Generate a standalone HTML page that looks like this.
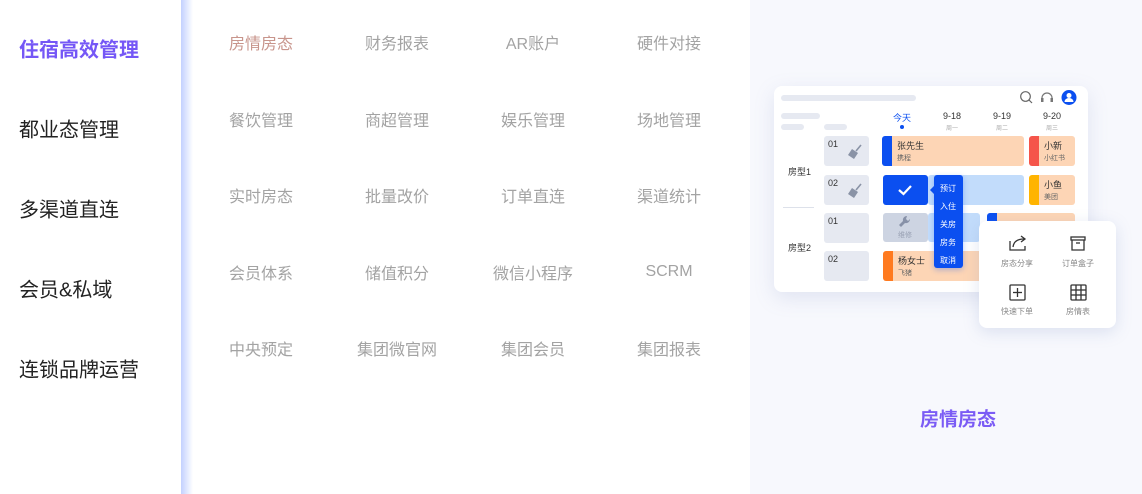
<!DOCTYPE html>
<html><head><meta charset="utf-8"><style>
*{margin:0;padding:0;box-sizing:border-box}
body{width:1142px;height:494px;overflow:hidden;background:#fff;position:relative;font-family:"Liberation Sans","Noto Sans CJK SC",sans-serif}
.a{position:absolute;white-space:nowrap}
.left{position:absolute;left:0;top:0;width:181px;height:494px;background:#fff}
.edge{position:absolute;left:181px;top:0;width:12px;height:494px;background:linear-gradient(90deg,#c3d1ff,#fff)}
.l{position:absolute;left:19px;font-size:20px;color:#222;transform:translateY(-50%)}
.g{position:absolute;font-size:16px;color:#a3a3a3;transform:translate(-50%,-50%)}
.right{position:absolute;left:750px;top:0;width:392px;height:494px;background:#f7f8fd}
.card{position:absolute;left:774px;top:86px;width:314px;height:206px;background:#fff;border-radius:8px;box-shadow:0 6px 20px rgba(120,140,190,.18)}
.bx{position:absolute}
.t{position:absolute;font-size:9px;color:#333;white-space:nowrap}
.s{position:absolute;font-size:7px;color:#666;white-space:nowrap}
</style></head><body>
<div class="left"></div><div class="edge"></div>
<div class="l" style="top:48px;color:#7557f6;font-weight:bold">住宿高效管理</div>
<div class="l" style="top:128px">都业态管理</div>
<div class="l" style="top:208px">多渠道直连</div>
<div class="l" style="top:288px">会员&amp;私域</div>
<div class="l" style="top:368px">连锁品牌运营</div>

<div class="g" style="left:261px;top:42px;color:#c8958c">房情房态</div>
<div class="g" style="left:397px;top:42px">财务报表</div>
<div class="g" style="left:533px;top:42px">AR账户</div>
<div class="g" style="left:669px;top:42px">硬件对接</div>
<div class="g" style="left:261px;top:119px">餐饮管理</div>
<div class="g" style="left:397px;top:119px">商超管理</div>
<div class="g" style="left:533px;top:119px">娱乐管理</div>
<div class="g" style="left:669px;top:119px">场地管理</div>
<div class="g" style="left:261px;top:195px">实时房态</div>
<div class="g" style="left:397px;top:195px">批量改价</div>
<div class="g" style="left:533px;top:195px">订单直连</div>
<div class="g" style="left:669px;top:195px">渠道统计</div>
<div class="g" style="left:261px;top:272px">会员体系</div>
<div class="g" style="left:397px;top:272px">储值积分</div>
<div class="g" style="left:533px;top:272px">微信小程序</div>
<div class="g" style="left:669px;top:272px">SCRM</div>
<div class="g" style="left:261px;top:348px">中央预定</div>
<div class="g" style="left:397px;top:348px">集团微官网</div>
<div class="g" style="left:533px;top:348px">集团会员</div>
<div class="g" style="left:669px;top:348px">集团报表</div>

<div class="right"></div>
<div class="a" style="left:958px;top:418px;transform:translate(-50%,-50%);font-size:19px;font-weight:bold;color:#7b5cf5">房情房态</div>

<div class="card"></div>
<div class="bx" style="left:781px;top:95px;width:135px;height:6px;border-radius:3px;background:#e6e9f1"></div>
<svg class="bx" style="left:1019px;top:90px" width="60" height="16" viewBox="0 0 60 16">
<circle cx="6.5" cy="6.5" r="4.8" fill="none" stroke="#666" stroke-width="1.2"/><line x1="10" y1="10" x2="13" y2="13" stroke="#666" stroke-width="1.2"/>
<path d="M23 10 V8 a5 5 0 0 1 10 0 V10" fill="none" stroke="#777" stroke-width="1.2"/><rect x="22" y="8" width="2.5" height="4" fill="#777"/><rect x="31.5" y="8" width="2.5" height="4" fill="#777"/>
<circle cx="50" cy="7.5" r="7.5" fill="#0b4ff0"/><circle cx="50" cy="5.5" r="2.5" fill="#fff"/><path d="M45.5 12 a4.5 4 0 0 1 9 0z" fill="#fff"/>
</svg>
<div class="bx" style="left:781px;top:113px;width:39px;height:6px;border-radius:3px;background:#e6e9f1"></div>
<div class="bx" style="left:781px;top:124px;width:23px;height:6px;border-radius:3px;background:#e6e9f1"></div>
<div class="bx" style="left:824px;top:124px;width:23px;height:6px;border-radius:3px;background:#e6e9f1"></div>
<div class="t" style="left:902px;top:111px;transform:translateX(-50%);color:#0b4ff0">今天</div>
<div class="bx" style="left:900px;top:125px;width:4px;height:4px;border-radius:2px;background:#0b4ff0"></div>
<div class="t" style="left:952px;top:111px;transform:translateX(-50%)">9-18</div>
<div class="t" style="left:1002px;top:111px;transform:translateX(-50%)">9-19</div>
<div class="t" style="left:1052px;top:111px;transform:translateX(-50%)">9-20</div>
<div class="s" style="left:952px;top:123px;transform:translateX(-50%);color:#aaa;font-size:6px">周一</div>
<div class="s" style="left:1002px;top:123px;transform:translateX(-50%);color:#aaa;font-size:6px">周二</div>
<div class="s" style="left:1052px;top:123px;transform:translateX(-50%);color:#aaa;font-size:6px">周三</div>

<div class="t" style="left:788px;top:165px">房型1</div>
<div class="bx" style="left:783px;top:207px;width:31px;height:1px;background:#dde1ea"></div>
<div class="t" style="left:788px;top:241px">房型2</div>

<div class="bx" style="left:824px;top:136px;width:45px;height:30px;border-radius:3px;background:#e6e9f1"></div>
<div class="bx" style="left:824px;top:175px;width:45px;height:30px;border-radius:3px;background:#e6e9f1"></div>
<div class="bx" style="left:824px;top:213px;width:45px;height:30px;border-radius:3px;background:#e6e9f1"></div>
<div class="bx" style="left:824px;top:251px;width:45px;height:30px;border-radius:3px;background:#e6e9f1"></div>
<div class="t" style="left:828px;top:139px">01</div>
<div class="t" style="left:828px;top:178px">02</div>
<div class="t" style="left:828px;top:216px">01</div>
<div class="t" style="left:828px;top:254px">02</div>
<svg class="bx" style="left:847px;top:144px" width="16" height="16" viewBox="0 0 16 16"><line x1="9" y1="7" x2="14" y2="1" stroke="#8a93a6" stroke-width="1.6"/><path d="M5 5 L11 9 L7 15 L1 11 Z" fill="#8a93a6"/></svg>
<svg class="bx" style="left:847px;top:183px" width="16" height="16" viewBox="0 0 16 16"><line x1="9" y1="7" x2="14" y2="1" stroke="#8a93a6" stroke-width="1.6"/><path d="M5 5 L11 9 L7 15 L1 11 Z" fill="#8a93a6"/></svg>

<div class="bx" style="left:882px;top:136px;width:142px;height:30px;border-radius:3px;background:#fdd5b5;border-left:10px solid #0b4ff0"></div>
<div class="t" style="left:897px;top:139px">张先生</div><div class="s" style="left:897px;top:153px">携程</div>
<div class="bx" style="left:1029px;top:136px;width:46px;height:30px;border-radius:3px;background:#fdd5b5;border-left:10px solid #f5554a"></div>
<div class="t" style="left:1044px;top:139px">小新</div><div class="s" style="left:1044px;top:153px">小红书</div>

<div class="bx" style="left:928px;top:175px;width:96px;height:30px;border-radius:3px;background:#c2dcfb"></div>
<div class="bx" style="left:883px;top:175px;width:45px;height:30px;border-radius:3px;background:#0b4ff0"></div>
<svg class="bx" style="left:897px;top:183px" width="16" height="14"><path d="M2 7 L6.5 11 L14 3" fill="none" stroke="#fff" stroke-width="2.2"/></svg>
<div class="bx" style="left:1029px;top:175px;width:46px;height:30px;border-radius:3px;background:#fdd5b5;border-left:10px solid #ffb400"></div>
<div class="t" style="left:1044px;top:178px">小鱼</div><div class="s" style="left:1044px;top:192px">美团</div>

<div class="bx" style="left:928px;top:213px;width:52px;height:29px;border-radius:3px;background:#c2dcfb"></div>
<div class="bx" style="left:883px;top:213px;width:45px;height:29px;border-radius:3px;background:#cdd4e2"></div>
<svg class="bx" style="left:898px;top:215px" width="14" height="14" viewBox="0 0 14 14"><path d="M9 1 a4 4 0 0 0 -4 5 L1 10 L3 12 L7 8 a4 4 0 0 0 5 -4 L10 6 L8 4 Z" fill="#8791a8"/></svg>
<div class="s" style="left:898px;top:230px;color:#98a0b3">维修</div>
<div class="bx" style="left:987px;top:213px;width:88px;height:29px;border-radius:3px;background:#fdd5b5;border-left:10px solid #0b4ff0"></div>

<div class="bx" style="left:883px;top:251px;width:100px;height:30px;border-radius:3px;background:#fdd5b5;border-left:10px solid #ff7a1f"></div>
<div class="t" style="left:898px;top:254px">杨女士</div><div class="s" style="left:898px;top:268px">飞猪</div>

<div class="bx" style="left:934px;top:175px;width:29px;height:93px;border-radius:3px;background:#0b4ff0;box-shadow:0 2px 6px rgba(11,79,240,.3)"></div>
<div class="bx" style="left:930px;top:186px;width:0;height:0;border:4px solid transparent;border-right-color:#0b4ff0;border-left:0"></div>
<div class="t" style="left:940px;top:180px;color:#fff;font-size:8px;line-height:18px">预订<br>入住<br>关房<br>房务<br>取消</div>

<div class="bx" style="left:979px;top:221px;width:137px;height:107px;border-radius:8px;background:#fff;box-shadow:0 4px 16px rgba(120,140,190,.22)"></div>
<svg class="bx" style="left:1008px;top:234px" width="90" height="68" viewBox="0 0 90 68" fill="none" stroke="#333" stroke-width="1.3">
<path d="M2 7 V16 H17 V12"/><path d="M5 13 Q6 5 16 5"/><path d="M13 2 L17 5 L13 8"/>
<rect x="63" y="3" width="14" height="3"/><path d="M64 6 V16 H76 V6"/><line x1="68" y1="9" x2="72" y2="9"/>
<rect x="2" y="51" width="15" height="15" rx="1"/><line x1="9.5" y1="54" x2="9.5" y2="63"/><line x1="5" y1="58.5" x2="14" y2="58.5"/>
<rect x="63" y="51" width="15" height="15" rx="1"/><line x1="68" y1="51" x2="68" y2="66"/><line x1="73" y1="51" x2="73" y2="66"/><line x1="63" y1="56" x2="78" y2="56"/><line x1="63" y1="61" x2="78" y2="61"/>
</svg>
<div class="s" style="left:1017px;top:258px;transform:translateX(-50%);color:#888;font-size:8px">房态分享</div>
<div class="s" style="left:1078px;top:258px;transform:translateX(-50%);color:#888;font-size:8px">订单盒子</div>
<div class="s" style="left:1017px;top:306px;transform:translateX(-50%);color:#888;font-size:8px">快速下单</div>
<div class="s" style="left:1078px;top:306px;transform:translateX(-50%);color:#888;font-size:8px">房情表</div>
</body></html>
